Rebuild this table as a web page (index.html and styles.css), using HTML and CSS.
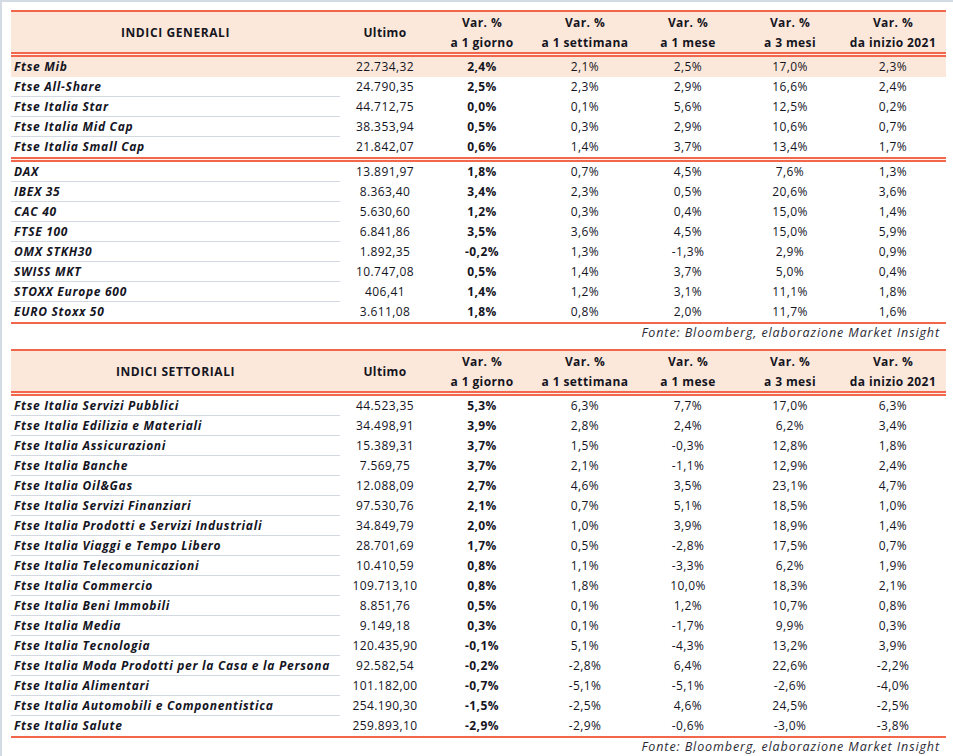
FILE: index.html
```html
<!DOCTYPE html>
<html lang="it">
<head>
<meta charset="utf-8">
<title>Indici</title>
<link rel="stylesheet" href="styles.css">
</head>
<body>
<div class="frame">
  <section class="tbl">
    <div class="hdr">
      <div class="h-title">INDICI GENERALI</div>
      <div class="h-col">Ultimo</div>
      <div class="h-col">Var. %<br>a 1 giorno</div>
      <div class="h-col">Var. %<br>a 1 settimana</div>
      <div class="h-col">Var. %<br>a 1 mese</div>
      <div class="h-col">Var. %<br>a 3 mesi</div>
      <div class="h-col">Var. %<br>da inizio 2021</div>
    </div>
    <div class="dbl"></div>
    <div class="grp">
      <div class="row hi"><div class="nm">Ftse Mib</div><div>22.734,32</div><div class="b">2,4%</div><div>2,1%</div><div>2,5%</div><div>17,0%</div><div>2,3%</div></div>
      <div class="row"><div class="nm">Ftse All-Share</div><div>24.790,35</div><div class="b">2,5%</div><div>2,3%</div><div>2,9%</div><div>16,6%</div><div>2,4%</div></div>
      <div class="row"><div class="nm">Ftse Italia Star</div><div>44.712,75</div><div class="b">0,0%</div><div>0,1%</div><div>5,6%</div><div>12,5%</div><div>0,2%</div></div>
      <div class="row"><div class="nm">Ftse Italia Mid Cap</div><div>38.353,94</div><div class="b">0,5%</div><div>0,3%</div><div>2,9%</div><div>10,6%</div><div>0,7%</div></div>
      <div class="row"><div class="nm">Ftse Italia Small Cap</div><div>21.842,07</div><div class="b">0,6%</div><div>1,4%</div><div>3,7%</div><div>13,4%</div><div>1,7%</div></div>
    </div>
    <div class="dbl"></div>
    <div class="grp">
      <div class="row"><div class="nm">DAX</div><div>13.891,97</div><div class="b">1,8%</div><div>0,7%</div><div>4,5%</div><div>7,6%</div><div>1,3%</div></div>
      <div class="row"><div class="nm">IBEX 35</div><div>8.363,40</div><div class="b">3,4%</div><div>2,3%</div><div>0,5%</div><div>20,6%</div><div>3,6%</div></div>
      <div class="row"><div class="nm">CAC 40</div><div>5.630,60</div><div class="b">1,2%</div><div>0,3%</div><div>0,4%</div><div>15,0%</div><div>1,4%</div></div>
      <div class="row"><div class="nm">FTSE 100</div><div>6.841,86</div><div class="b">3,5%</div><div>3,6%</div><div>4,5%</div><div>15,0%</div><div>5,9%</div></div>
      <div class="row"><div class="nm">OMX STKH30</div><div>1.892,35</div><div class="b">-0,2%</div><div>1,3%</div><div>-1,3%</div><div>2,9%</div><div>0,9%</div></div>
      <div class="row"><div class="nm">SWISS MKT</div><div>10.747,08</div><div class="b">0,5%</div><div>1,4%</div><div>3,7%</div><div>5,0%</div><div>0,4%</div></div>
      <div class="row"><div class="nm">STOXX Europe 600</div><div>406,41</div><div class="b">1,4%</div><div>1,2%</div><div>3,1%</div><div>11,1%</div><div>1,8%</div></div>
      <div class="row"><div class="nm">EURO Stoxx 50</div><div>3.611,08</div><div class="b">1,8%</div><div>0,8%</div><div>2,0%</div><div>11,7%</div><div>1,6%</div></div>
    </div>
    <div class="redline"></div>
  </section>
  <p class="src">Fonte: Bloomberg, elaborazione Market Insight</p>

  <section class="tbl">
    <div class="hdr">
      <div class="h-title">INDICI SETTORIALI</div>
      <div class="h-col">Ultimo</div>
      <div class="h-col">Var. %<br>a 1 giorno</div>
      <div class="h-col">Var. %<br>a 1 settimana</div>
      <div class="h-col">Var. %<br>a 1 mese</div>
      <div class="h-col">Var. %<br>a 3 mesi</div>
      <div class="h-col">Var. %<br>da inizio 2021</div>
    </div>
    <div class="dbl"></div>
    <div class="grp">
      <div class="row"><div class="nm">Ftse Italia Servizi Pubblici</div><div>44.523,35</div><div class="b">5,3%</div><div>6,3%</div><div>7,7%</div><div>17,0%</div><div>6,3%</div></div>
      <div class="row"><div class="nm">Ftse Italia Edilizia e Materiali</div><div>34.498,91</div><div class="b">3,9%</div><div>2,8%</div><div>2,4%</div><div>6,2%</div><div>3,4%</div></div>
      <div class="row"><div class="nm">Ftse Italia Assicurazioni</div><div>15.389,31</div><div class="b">3,7%</div><div>1,5%</div><div>-0,3%</div><div>12,8%</div><div>1,8%</div></div>
      <div class="row"><div class="nm">Ftse Italia Banche</div><div>7.569,75</div><div class="b">3,7%</div><div>2,1%</div><div>-1,1%</div><div>12,9%</div><div>2,4%</div></div>
      <div class="row"><div class="nm">Ftse Italia Oil&amp;Gas</div><div>12.088,09</div><div class="b">2,7%</div><div>4,6%</div><div>3,5%</div><div>23,1%</div><div>4,7%</div></div>
      <div class="row"><div class="nm">Ftse Italia Servizi Finanziari</div><div>97.530,76</div><div class="b">2,1%</div><div>0,7%</div><div>5,1%</div><div>18,5%</div><div>1,0%</div></div>
      <div class="row"><div class="nm">Ftse Italia Prodotti e Servizi Industriali</div><div>34.849,79</div><div class="b">2,0%</div><div>1,0%</div><div>3,9%</div><div>18,9%</div><div>1,4%</div></div>
      <div class="row"><div class="nm">Ftse Italia Viaggi e Tempo Libero</div><div>28.701,69</div><div class="b">1,7%</div><div>0,5%</div><div>-2,8%</div><div>17,5%</div><div>0,7%</div></div>
      <div class="row"><div class="nm">Ftse Italia Telecomunicazioni</div><div>10.410,59</div><div class="b">0,8%</div><div>1,1%</div><div>-3,3%</div><div>6,2%</div><div>1,9%</div></div>
      <div class="row"><div class="nm">Ftse Italia Commercio</div><div>109.713,10</div><div class="b">0,8%</div><div>1,8%</div><div>10,0%</div><div>18,3%</div><div>2,1%</div></div>
      <div class="row"><div class="nm">Ftse Italia Beni Immobili</div><div>8.851,76</div><div class="b">0,5%</div><div>0,1%</div><div>1,2%</div><div>10,7%</div><div>0,8%</div></div>
      <div class="row"><div class="nm">Ftse Italia Media</div><div>9.149,18</div><div class="b">0,3%</div><div>0,1%</div><div>-1,7%</div><div>9,9%</div><div>0,3%</div></div>
      <div class="row"><div class="nm">Ftse Italia Tecnologia</div><div>120.435,90</div><div class="b">-0,1%</div><div>5,1%</div><div>-4,3%</div><div>13,2%</div><div>3,9%</div></div>
      <div class="row"><div class="nm">Ftse Italia Moda Prodotti per la Casa e la Persona</div><div>92.582,54</div><div class="b">-0,2%</div><div>-2,8%</div><div>6,4%</div><div>22,6%</div><div>-2,2%</div></div>
      <div class="row"><div class="nm">Ftse Italia Alimentari</div><div>101.182,00</div><div class="b">-0,7%</div><div>-5,1%</div><div>-5,1%</div><div>-2,6%</div><div>-4,0%</div></div>
      <div class="row"><div class="nm">Ftse Italia Automobili e Componentistica</div><div>254.190,30</div><div class="b">-1,5%</div><div>-2,5%</div><div>4,6%</div><div>24,5%</div><div>-2,5%</div></div>
      <div class="row"><div class="nm">Ftse Italia Salute</div><div>259.893,10</div><div class="b">-2,9%</div><div>-2,9%</div><div>-0,6%</div><div>-3,0%</div><div>-3,8%</div></div>
    </div>
    <div class="redline"></div>
  </section>
  <p class="src">Fonte: Bloomberg, elaborazione Market Insight</p>
</div>
</body>
</html>
```

FILE: styles.css
```css
html, body {
  margin: 0;
  padding: 0;
  background: #ffffff;
}

body {
  font-family: "Open Sans", "DejaVu Sans", sans-serif;
  font-size: 12px;
  letter-spacing: 0.4px;
  color: #15151f;
}

.frame {
  box-sizing: border-box;
  min-height: 100vh;
  border-left: 2px solid #d5dbe5;
  border-top: 2px solid #d5dbe5;
  padding: 8px 0 0 9px;
}

.tbl {
  width: 935px;
}

.hdr,
.row {
  display: grid;
  grid-template-columns: 329px 90px 104px 102px 104px 100px 106px;
}

.hdr {
  box-sizing: border-box;
  border-top: 2px solid #f2664b;
  background: #fce8da;
  height: 42px;
  padding-top: 1px;
  font-weight: 700;
  align-items: center;
  text-align: center;
  line-height: 20px;
}

.h-title {
  letter-spacing: 0.6px;
}

.dbl {
  height: 1px;
  border-top: 2px solid #f2664b;
  border-bottom: 2px solid #f2664b;
  background: #fdf3ec;
}

.redline {
  height: 2px;
  background: #f2664b;
}

.row {
  height: 20px;
  align-items: center;
  text-align: center;
  line-height: 20px;
}

.row > div {
  height: 20px;
  box-sizing: border-box;
  white-space: nowrap;
}

.row .nm {
  text-align: left;
  padding-left: 3px;
  font-weight: 700;
  font-style: italic;
  letter-spacing: 0.7px;
  border-bottom: 1px solid #d3d9e3;
}

.grp .row:last-child .nm {
  border-bottom-color: transparent;
}

.row.hi {
  background: #fce8da;
}

.row.hi .nm {
  border-bottom-color: #fce8da;
}

.b {
  font-weight: 700;
}

.src {
  margin: 0;
  width: 929px;
  height: 25px;
  text-align: right;
  font-style: italic;
  font-size: 12.5px;
  letter-spacing: 0.9px;
  line-height: 17px;
  color: #2a2a34;
}
```
